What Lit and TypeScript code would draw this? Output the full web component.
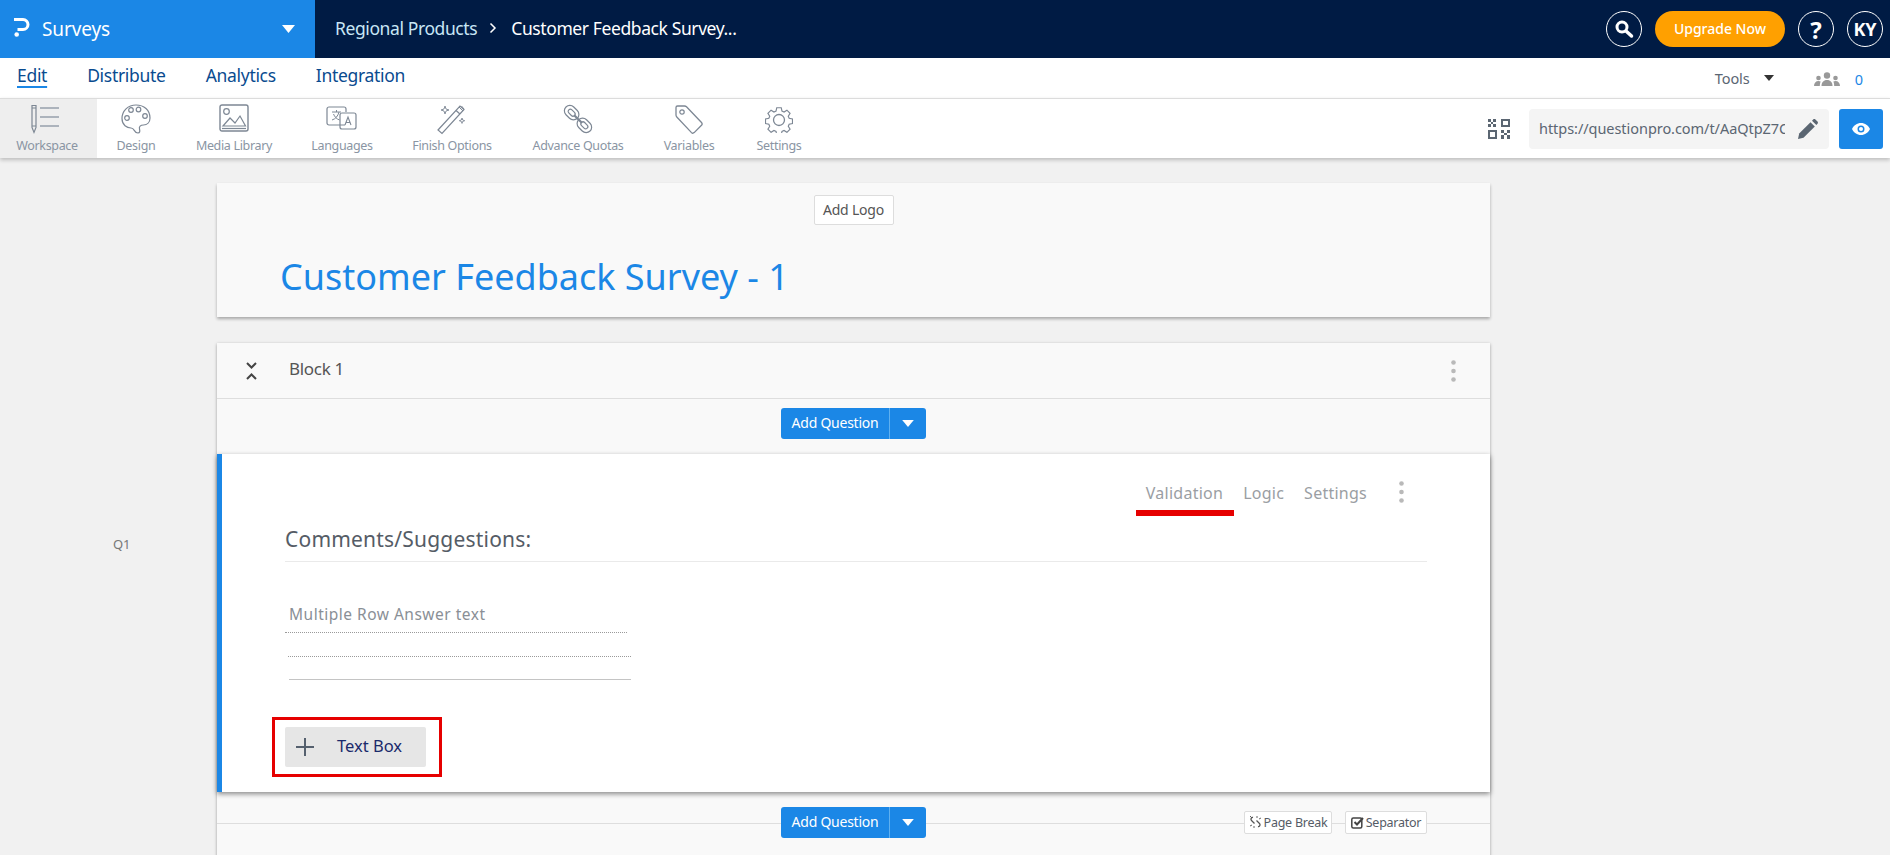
import { LitElement, html, css, svg } from "lit";
import { customElement } from "lit/decorators.js";

const ic = (w: number, h: number, body: unknown) => html`<svg width=${w} height=${h} viewBox="0 0 ${w} ${h}" fill="none" stroke="#7d8794" stroke-width="1.2">${body}</svg>`;

const tools = [
  { label: "Workspace", active: true, icon: ic(44, 32, svg`<path d="M7 2.500h4v22l-2 5-2-5z"/><path d="M7 5h4M7 23h4"/><path d="M15 5h19M15 14h19M15 23h19" stroke="#97a0ac" stroke-width="1.500"/>`) },
  { label: "Design", icon: ic(32, 32, svg`<path d="M16 2C8 2 2 8 2 15.500 2 22 7 25 11 25c4 0 2.500 5 7 5 2 0 2-2 1.500-4-.7-2.500 1-4 4-4 3.500 0 6.500-2.500 6.500-7C30 7 24 2 16 2z"/><circle cx="7" cy="15" r="2.300"/><circle cx="11" cy="7" r="2.300"/><circle cx="18.500" cy="6.500" r="2.300"/><circle cx="25" cy="13" r="2.300"/>`) },
  { label: "Media Library", icon: ic(30, 30, svg`<rect x="1" y="1" width="28" height="26" rx="2" stroke-width="1.400"/><circle cx="7.500" cy="7.500" r="2.800"/><path d="M4 22l7-8 5 5 5-7 5.500 10z"/><path d="M3 24.500h24"/>`) },
  { label: "Languages", icon: ic(32, 28, svg`<path d="M19 20H3a2 2 0 0 1-2-2V4a2 2 0 0 1 2-2h15a2 2 0 0 1 2 2v3"/><rect x="14" y="8" width="16" height="16" rx="2"/><path d="M6 7h9M10.500 5v2M13 7c-1 4-3.500 7-7 8M7.500 9c1 2.500 3 5 6 6" stroke-width="1"/><path d="M19 20l3-8 3 8M20 17.500h4" stroke-width="1.100"/>`) },
  { label: "Finish Options", icon: ic(32, 32, svg`<path d="M2 27L24 3l4 3.500L6 30.500z"/><path d="M20 7.500l4 3.500"/><path d="M23 4l4 4M25.500 3l2.500 3" stroke-width="1"/><path d="M9 3l1 3 3 1-3 1-1 3-1-3-3-1 3-1z" stroke-width=".9"/><path d="M26 15l.7 2 2 .7-2 .7-.7 2-.7-2-2-.7 2-.7z" stroke-width=".9"/>`) },
  { label: "Advance Quotas", icon: ic(32, 32, svg`<g transform="rotate(45 16 16)"><rect x="-1" y="10.500" width="16" height="11" rx="5.500"/><rect x="3" y="13.800" width="8" height="4.400" rx="2.200"/><rect x="17" y="10.500" width="16" height="11" rx="5.500"/><rect x="21" y="13.800" width="8" height="4.400" rx="2.200"/><path d="M11 16h10" stroke-width="2.200"/></g>`) },
  { label: "Variables", icon: ic(30, 30, svg`<path d="M2 3.500A1.500 1.500 0 0 1 3.500 2h7c.8 0 1.500.3 2 .8l15 15.700c.7.800.7 2 0 2.700l-7.300 7.400c-.8.700-2 .7-2.700 0L2.800 13c-.5-.5-.8-1.200-.8-2z" stroke-width="1.300"/><circle cx="8" cy="8" r="2.200"/>`) },
  { label: "Settings", icon: ic(28, 28, svg`<path d="M11.500 1.500h5l.8 3.700 2.300 1 3.200-2 3.500 3.500-2 3.200 1 2.300 3.700.8v5l-3.700.8-1 2.300 2 3.200-3.500 3.500-3.200-2-2.300 1-.8 3.700h-5l-.8-3.700-2.300-1-3.200 2-3.500-3.500 2-3.200-1-2.300-3.700-.8v-5l3.700-.8 1-2.300-2-3.200 3.500-3.500 3.200 2 2.300-1z" transform="translate(1.400 1.400) scale(.9)" stroke-width="1.300"/><circle cx="14" cy="15" r="5.500" stroke-width="1.300"/>`) },
];

const caret = (w: number, h: number, color = "#fff") => html`<svg width=${w} height=${h} viewBox="0 0 10 6"><path d="M0 0h10L5 6z" fill=${color}/></svg>`;
const dots = html`<svg width="5" height="22" viewBox="0 0 5 22" fill="#b9b9b9"><circle cx="2.500" cy="2.500" r="2.300"/><circle cx="2.500" cy="11" r="2.300"/><circle cx="2.500" cy="19.500" r="2.300"/></svg>`;

@customElement("app-root")
export class AppRoot extends LitElement {
  static styles = css`
    :host { display: block; width: 1890px; height: 855px; overflow: hidden; background: #f1f1f1; font-family: "Noto Sans", "Open Sans", sans-serif; color: #555; }
    * { box-sizing: border-box; }
    .top { display: flex; height: 58px; background: #001b44; color: #fff; }
    .brand { width: 315px; background: #1b87e6; display: flex; align-items: center; padding: 0 20px 0 14px; }
    .brand .logo { margin-top: -3px; display: flex; }
    .brand .name { font-size: 19px; margin-left: 12px; flex: 1; letter-spacing: -.1px; padding-bottom: 1px; }
    .crumbs { flex: 1; display: flex; align-items: center; padding-left: 20px; padding-bottom: 2px; font-size: 17.500px; letter-spacing: -.4px; }
    .crumbs .r { color: #c8e6f5; }
    .crumbs .sep { margin: 0 14px 0 12px; display: flex; }
    .top-actions { display: flex; align-items: center; gap: 13px; padding-right: 7px; }
    .circle { width: 36px; height: 36px; border: 1px solid #fff; border-radius: 50%; display: flex; align-items: center; justify-content: center; font-weight: 700; font-size: 18px; }
    .circle.help { font-size: 24px; }
    .upgrade { width: 130px; height: 36px; border-radius: 18px; background: #ffa000; display: flex; align-items: center; justify-content: center; font-size: 14px; font-weight: 500; padding-bottom: 2px; }
    .nav { background: #fff; border-bottom: 1px solid #dcdcdc; display: flex; align-items: center; padding-left: 17px; padding-bottom: 6px; height: 41px; }
    .tab { font-size: 17.500px; color: #0a4b8f; letter-spacing: -.3px; margin-right: 40px; line-height: 24px; }
    .tab.on { text-decoration: underline; text-decoration-color: #1b87e6; text-underline-offset: 4px; text-decoration-thickness: 2px; }
    .spacer { flex: 1; }
    .tools-menu { display: flex; align-items: center; margin-top: 6px; font-size: 14.500px; color: #5b6672; letter-spacing: -.05px; gap: 14px; }
    .people { display: flex; align-items: center; margin-top: 7px; margin-left: 40px; margin-right: 27px; gap: 15px; color: #1b87e6; font-size: 14.500px; }
    .bar { height: 60px; margin-top: -1px; background: #fff; display: flex; align-items: stretch; box-shadow: 0 2px 4px rgba(0,0,0,.22); position: relative; border-top: 1px solid #dcdcdc; }
    .toolgrid { display: grid; grid-template-columns: 97px 78px 118px 98px 122px 130px 92px 88px; }
    .tool { display: flex; flex-direction: column; align-items: center; justify-content: flex-end; padding-bottom: 3px; font-size: 12.500px; letter-spacing: -.33px; color: #8a95a3; line-height: 18px; }
    .tool.on { background: #eee; padding-right: 3px; }
    .tool .i { height: 36px; display: flex; align-items: center; justify-content: center; }
    .url-wrap { display: flex; align-items: center; padding-right: 7px; }
    .qr { margin-right: 19px; display: flex; }
    .url { width: 300px; height: 40px; background: #f4f4f4; border-radius: 4px; display: flex; align-items: center; padding-left: 10px; padding-right: 9px; font-size: 14.500px; color: #5b6672; }
    .url span { width: 246px; overflow: hidden; white-space: nowrap; letter-spacing: -.05px; padding-bottom: 1px; }
    .url svg { margin-left: 13px; flex: none; }
    .eye { width: 44px; height: 40px; margin-left: 10px; background: #1b87e6; border-radius: 3px; display: flex; align-items: center; justify-content: center; }
    .main { display: grid; grid-template-columns: 217px 1273px; padding-top: 25px; }
    .gutter { font-size: 13px; color: #777; padding-top: 352px; padding-left: 113px; letter-spacing: -.2px; }
    .card { background: #f9f9f9; box-shadow: 0 1px 3px rgba(0,0,0,.35); }
    .head { height: 134px; display: flex; flex-direction: column; align-items: center; margin-bottom: 26px; box-shadow: 0 2px 3px rgba(0,0,0,.3); }
    .logo-btn { margin-top: 12px; width: 80px; height: 30px; background: #fff; border: 1px solid #ddd; border-radius: 2px; font-size: 14px; display: flex; align-items: center; justify-content: center; letter-spacing: -.2px; padding-bottom: 2px; }
    .title { align-self: flex-start; margin: 27px 0 0 63px; color: #1b87e6; font-size: 36px; line-height: 50px; letter-spacing: 0; white-space: nowrap; }
    .block-head { height: 56px; display: flex; align-items: center; padding-left: 29px; border-bottom: 1px solid #dedede; font-size: 17px; letter-spacing: -.3px; }
    .block-head .lbl { margin-left: 32px; flex: 1; padding-bottom: 4px; }
    .block-head .d { margin-right: 34px; display: flex; margin-top: 1px; }
    .addrow { height: 55px; padding-top: 9px; display: flex; justify-content: center; }
    .add { width: 145px; height: 31px; background: #1b87e6; border-radius: 3px; color: #fff; display: flex; align-items: center; font-size: 14px; letter-spacing: -.25px; }
    .add .t { width: 109px; text-align: center; border-right: 1px solid #5fb0f0; line-height: 29px; height: 31px; }
    .add .c { flex: 1; display: flex; justify-content: center; }
    .q { height: 338px; background: #fff; border-left: 5px solid #1b87e6; box-shadow: 0 2px 5px rgba(0,0,0,.45); position: relative; z-index: 1; padding-left: 63px; padding-right: 63px; display: flex; flex-direction: column; }
    .q-tabs { display: flex; justify-content: flex-end; align-items: flex-start; height: 50px; padding-top: 25px; font-size: 16px; color: #9a9ea3; letter-spacing: .25px; line-height: 28px; }
    .q-tabs span { margin-left: 20px; }
    .q-tabs .d { margin-left: 32px; margin-right: 23px; margin-top: 2px; display: flex; }
    .q-tabs .val { position: relative; }
    .mark { position: absolute; left: -10px; right: -11px; top: 31px; height: 6px; background: #e60000; }
    .q-title { height: 58px; border-bottom: 1px solid #eaeaea; font-size: 21px; color: #555c66; line-height: 70px; letter-spacing: .2px; }
    .answers { margin-top: 34px; width: 346px; }
    .ans { height: 23.500px; border-bottom: 1px dotted #9a9a9a; }
    .ans.one { height: 37px; font-size: 15.500px; color: #8a8f96; padding-left: 4px; line-height: 37px; width: 342px; letter-spacing: .5px; }
    .ans.two { margin-left: 3px; width: 343px; }
    .ans.three { margin-left: 4px; width: 342px; border-bottom-style: solid; border-bottom-color: #c4c4c4; }
    .add-box { margin-top: 47px; width: 141px; height: 40px; background: #e6e6e6; border-radius: 2px; display: flex; align-items: center; padding-left: 11px; color: #1a2a6c; font-size: 16.500px; letter-spacing: 0; position: relative; }
    .add-box .t { margin-left: 23px; padding-bottom: 4px; }
    .red { position: absolute; left: -13px; top: -10px; width: 170px; height: 60px; border: 3px solid #e60000; }
    .foot { position: relative; height: 90px; background: #f9f9f9; display: flex; align-items: flex-start; padding-top: 15px; }
    .foot .line { position: absolute; left: 0; right: 0; top: 31px; border-top: 1px solid #dedede; }
    .foot .add { position: absolute; left: 564px; top: 15px; }
    .chip { position: absolute; top: 19px; height: 23px; background: #fff; border: 1px solid #ddd; border-radius: 2px; font-size: 12.500px; display: flex; align-items: center; justify-content: center; gap: 2px; letter-spacing: -.25px; color: #555c66; padding-bottom: 1px; }
    .chip.pb { left: 1027px; width: 88px; }
    .chip.sp { left: 1128px; width: 82px; }
  `;

  render() {
    return html`
      <div class="top">
        <div class="brand">
          <span class="logo"><svg width="16" height="19" viewBox="0 0 16 19"><path d="M0 1.500h9a5 5 0 0 1 0 10H3.500" fill="none" stroke="#fff" stroke-width="3"/><circle cx="2.700" cy="16.500" r="2.300" fill="#fff"/></svg></span>
          <span class="name">Surveys</span>
          ${caret(13, 8)}
        </div>
        <div class="crumbs">
          <span class="r">Regional Products</span>
          <span class="sep"><svg width="8" height="12" viewBox="0 0 8 12" fill="none" stroke="#fff" stroke-width="1.500"><path d="M1.500 1.500L6 6l-4.500 4.500"/></svg></span>
          <span>Customer Feedback Survey...</span>
        </div>
        <div class="top-actions">
          <div class="circle"><svg width="20" height="20" viewBox="0 0 20 20" fill="none" stroke="#fff"><circle cx="8" cy="8" r="5" stroke-width="3"/><path d="M12 12l5.500 5" stroke-width="3.500" stroke-linecap="round"/></svg></div>
          <div class="upgrade">Upgrade Now</div>
          <div class="circle help">?</div>
          <div class="circle">KY</div>
        </div>
      </div>
      <div class="nav">
        <span class="tab on">Edit</span>
        <span class="tab">Distribute</span>
        <span class="tab">Analytics</span>
        <span class="tab">Integration</span>
        <span class="spacer"></span>
        <span class="tools-menu">Tools ${caret(10, 6, "#333")}</span>
        <span class="people">
          <svg width="26" height="14" viewBox="0 0 26 14" fill="#999"><circle cx="13" cy="3.500" r="3.200"/><path d="M7.500 14c0-3.500 2-6 5.500-6s5.500 2.500 5.500 6z"/><circle cx="4.500" cy="6" r="2.300"/><path d="M0 14c0-3 1.800-5 4.500-5 1 0 1.600.3 2.100.6C6 11 5.800 12.500 5.800 14z"/><circle cx="21.500" cy="6" r="2.300"/><path d="M26 14c0-3-1.800-5-4.500-5-1 0-1.600.3-2.100.6.600 1.400.8 2.900.8 4.400z"/></svg>
          <span>0</span>
        </span>
      </div>
      <div class="bar">
        <div class="toolgrid">
          ${tools.map((t) => html`<div class="tool ${t.active ? "on" : ""}"><div class="i">${t.icon}</div>${t.label}</div>`)}
        </div>
        <span class="spacer"></span>
        <div class="url-wrap">
          <span class="qr"><svg width="22" height="20" viewBox="0 0 22 20" fill="#5b6672"><path d="M0 0h3v3H0zM5 0h3v3H5zM3 3h2v2H3zM0 5h3v3H0zM5 5h3v3H5z"/><path fill-rule="evenodd" d="M13 0h9v8h-9zM15 2v4h5V2z"/><path fill-rule="evenodd" d="M0 11h9v9H0zM2 13v5h5v-5z"/><path d="M13 11h3v3h-3zM19 11h3v3h-3zM16 14h3v2h-3zM13 16h3v4h-3zM19 16h3v4h-3z"/></svg></span>
          <div class="url">
            <span>https://questionpro.com/t/AaQtpZ7Cabc</span>
            <svg width="20" height="20" viewBox="0 0 20 20" fill="#5b6672"><path d="M0 20l1.200-5.500L12.500 3.200l4.300 4.300L5.500 18.800z"/><path d="M14 1.700l1.200-1.200c.6-.6 1.600-.6 2.200 0l2.100 2.100c.6.600.6 1.600 0 2.200L18.300 6z"/></svg>
          </div>
          <div class="eye"><svg width="18" height="12" viewBox="0 0 18 12"><path fill-rule="evenodd" fill="#fff" d="M9 0c4 0 7.300 2.500 9 6-1.700 3.500-5 6-9 6s-7.300-2.500-9-6c1.700-3.500 5-6 9-6zm0 2.500a3.500 3.500 0 1 0 0 7 3.500 3.500 0 0 0 0-7z"/><circle cx="9" cy="6" r="2" fill="#fff"/></svg></div>
        </div>
      </div>
      <div class="main">
        <div class="gutter">Q1</div>
        <div>
          <div class="card head">
            <div class="logo-btn">Add Logo</div>
            <div class="title">Customer Feedback Survey - 1</div>
          </div>
          <div class="card">
            <div class="block-head">
              <svg width="11" height="18" viewBox="0 0 11 18" fill="none" stroke="#444" stroke-width="2"><path d="M1 1l4.500 4.500L10 1M1 17l4.500-4.500L10 17"/></svg>
              <span class="lbl">Block 1</span>
              <span class="d">${dots}</span>
            </div>
            <div class="addrow"><div class="add"><span class="t">Add Question</span><span class="c">${caret(12, 7)}</span></div></div>
            <div class="q">
              <div class="q-tabs">
                <span class="val">Validation<i class="mark"></i></span>
                <span>Logic</span>
                <span>Settings</span>
                <div class="d">${dots}</div>
              </div>
              <div class="q-title">Comments/Suggestions:</div>
              <div class="answers">
                <div class="ans one">Multiple Row Answer text</div>
                <div class="ans two"></div>
                <div class="ans three"></div>
              </div>
              <div class="add-box">
                <i class="red"></i>
                <svg width="18" height="18" viewBox="0 0 18 18" stroke="#55606e" stroke-width="2"><path d="M9 0v18M0 9h18"/></svg>
                <span class="t">Text Box</span>
              </div>
            </div>
            <div class="foot">
              <div class="line"></div>
              <div class="add"><span class="t">Add Question</span><span class="c">${caret(12, 7)}</span></div>
              <div class="chip pb"><svg width="13" height="14" viewBox="0 0 13 14" fill="none" stroke="#555" stroke-width="1.300"><path d="M4 2.500C2 2 1.500 4.500 2.500 5.500l3 3M9 11.500c2 .5 2.500-2 1.500-3l-3-3"/><path d="M1 1l1 1M8 1v2M12 3l-2 1M1 11l2-1M5 13v-2" stroke-width=".9"/></svg>Page Break</div>
              <div class="chip sp"><svg width="13" height="13" viewBox="0 0 13 13" fill="none" stroke="#444"><rect x=".8" y="2" width="10" height="10" rx="1.500" stroke-width="1.500"/><path d="M3.500 6l2.500 2.500L12 2" stroke-width="2"/></svg>Separator</div>
            </div>
          </div>
        </div>
      </div>
    `;
  }
}
